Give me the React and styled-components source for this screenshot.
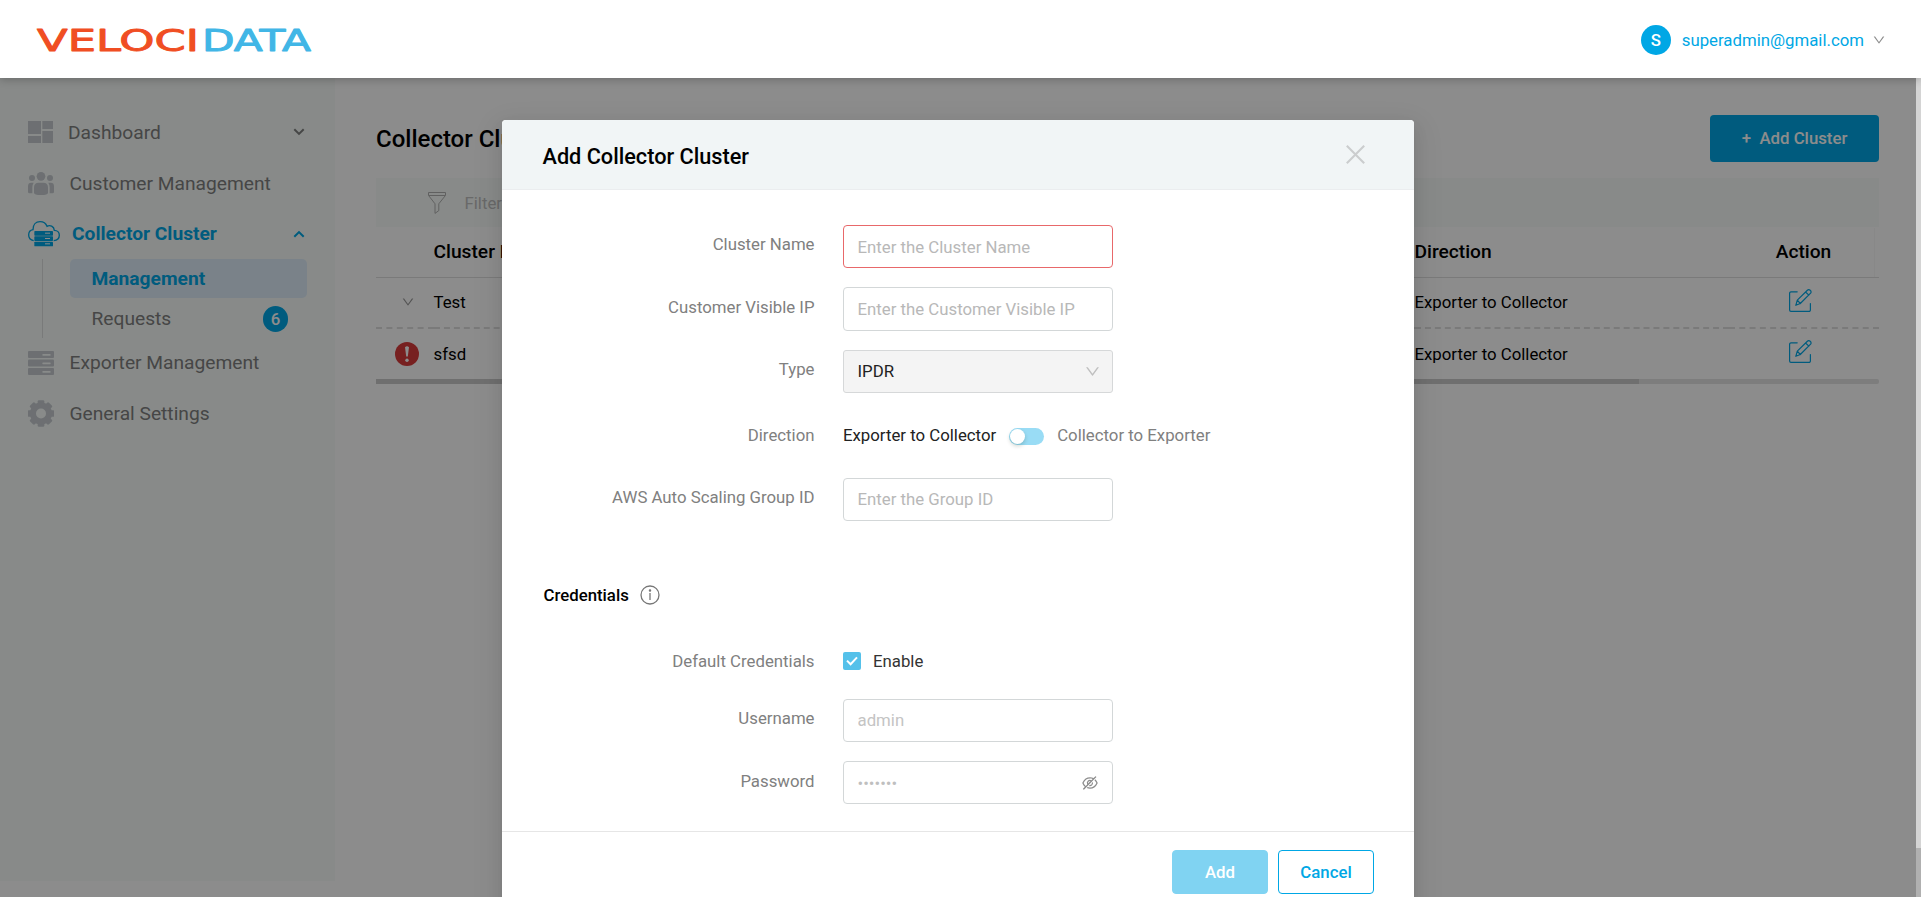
import React from "react";
import styled, { createGlobalStyle } from "styled-components";
import { AiOutlineDown, AiOutlineEyeInvisible } from "react-icons/ai";

const GlobalStyle = createGlobalStyle`
  *, *::before, *::after { box-sizing: border-box; }
  body {
    margin: 0;
    background: #fff;
    font-family: Roboto, "Liberation Sans", sans-serif;
    font-size: 16.8px;
    color: #000;
    overflow: hidden;
  }
`;

const brand = "#00a7e5";

const Page = styled.div`
  position: relative;
  height: 897px;
  overflow: hidden;
  display: flex;
  flex-direction: column;
`;

const Header = styled.header`
  position: relative;
  z-index: 3;
  flex: none;
  height: 78px;
  background: #fff;
  box-shadow: 0 2px 8px rgba(0, 0, 0, 0.22);
  display: flex;
  align-items: center;
  justify-content: space-between;
  padding: 2px 35px 0 32px;
`;

const Account = styled.div`
  display: flex;
  align-items: center;
  color: ${brand};
  svg { color: #8c8c8c; margin-left: 8px; }
`;

const Avatar = styled.span`
  width: 30px;
  height: 30px;
  border-radius: 50%;
  background: ${brand};
  color: #fff;
  font-weight: 500;
  display: flex;
  align-items: center;
  justify-content: center;
  margin-right: 11px;
`;

const Layout = styled.div`
  flex: 1;
  display: flex;
  align-items: flex-start;
`;

const Sidebar = styled.nav`
  width: 335px;
  height: 803px;
  flex: none;
  background: #f7fcf9;
  padding: 29px 28px 0;
`;

const NavItem = styled.div`
  height: 50.7px;
  display: flex;
  align-items: center;
  padding-right: 2.5px;
  font-size: 19.2px;
  color: ${(p) => (p.$active ? brand : "#808080")};
  font-weight: ${(p) => (p.$active ? 700 : 400)};
  > span { flex: 1; padding-left: ${(p) => p.$gap}px; }
  > svg { flex: none; }
`;

const SubMenu = styled.div`
  height: 79px;
  margin-left: 14px;
  border-left: 1px solid #dcdfde;
  padding-left: 27px;
  margin-bottom: -0.8px;
`;

const SubItem = styled.div`
  height: 39px;
  padding: 0 19px 0 21.5px;
  margin-bottom: 1px;
  display: flex;
  align-items: center;
  justify-content: space-between;
  border-radius: 5px;
  font-size: 19.2px;
  background: ${(p) => (p.$active ? "#dfedf9" : "transparent")};
  color: ${(p) => (p.$active ? brand : "#808080")};
  font-weight: ${(p) => (p.$active ? 700 : 400)};
`;

const Badge = styled.span`
  width: 25px;
  height: 26px;
  border-radius: 13px;
  background: ${brand};
  color: #fff;
  font-size: 16.8px;
  font-weight: 500;
  display: flex;
  align-items: center;
  justify-content: center;
`;

const Main = styled.main`
  flex: 1;
  padding: 37px 42px 0 41px;
`;

const TitleBar = styled.div`
  height: 47px;
  display: flex;
  align-items: center;
  justify-content: space-between;
  margin-bottom: 16px;
`;

const Title = styled.h1`
  margin: 0;
  font-size: 24px;
  font-weight: 500;
`;

const AddClusterButton = styled.button`
  width: 169px;
  height: 47px;
  border: 0;
  border-radius: 4px;
  background: ${brand};
  color: #fff;
  font: 500 16.8px Roboto, sans-serif;
  display: flex;
  align-items: center;
  justify-content: center;
  gap: 8.5px;
  padding-bottom: 2px;
`;

const FilterBar = styled.div`
  height: 49px;
  background: #f7fcf9;
  display: flex;
  align-items: center;
  padding-left: 52px;
  gap: 18.5px;
  color: #bfbfbf;
`;

const TableRow = styled.div`
  display: grid;
  grid-template-columns: 57.5px 981px 1fr 150px;
  height: ${(p) => p.$height}px;
  > div {
    display: flex;
    align-items: center;
    border-bottom: ${(p) => p.$line};
  }
`;

const HeadRow = styled(TableRow)`
  font-size: 19.2px;
  font-weight: 500;
  > div { padding-bottom: 2px; }
`;

const StatusCell = styled.div`
  padding-left: ${(p) => p.$inset}px;
`;

const ActionCell = styled.div`
  justify-content: center;
  padding-right: ${(p) => p.$shift || 0}px;
  padding-bottom: ${(p) => p.$lift || 0}px;
`;

const ColumnRule = styled.div`
  width: 1px;
  height: 49px;
  margin: -50px 4px 0 auto;
  background: #f7f7f7;
`;

const HorizontalTrack = styled.div`
  height: 5px;
  background: #e4e4e4;
  border-radius: 2px;
  > div { width: 1263px; height: 5px; background: #cbcbcb; }
`;

const Overlay = styled.div`
  position: absolute;
  z-index: 2;
  inset: 78px 0 0 0;
  background: rgba(0, 0, 0, 0.45);
  display: flex;
`;

const DialogArea = styled.div`
  flex: 1;
  display: flex;
  justify-content: center;
  align-items: flex-start;
  padding-top: 42px;
  overflow: hidden;
`;

const VerticalTrack = styled.div`
  width: 5px;
  background: #d4d4d4;
  padding-top: 770px;
  > div { height: 49px; background: #b0b0b0; }
`;

const Dialog = styled.section`
  width: 912px;
  background: #fff;
  border-radius: 4px;
  box-shadow: 0 3px 6px -4px rgba(0, 0, 0, 0.12), 0 6px 16px rgba(0, 0, 0, 0.08),
    0 9px 28px 8px rgba(0, 0, 0, 0.05);
`;

const DialogHeader = styled.div`
  height: 70px;
  padding: 3px 49px 0 40.5px;
  display: flex;
  align-items: center;
  justify-content: space-between;
  background: #f1f5f6;
  border-bottom: 1px solid #ebedef;
  border-radius: 4px 4px 0 0;
  h2 { margin: 0; font-size: 21.7px; font-weight: 500; }
  svg { margin-bottom: 3px; }
`;

const Form = styled.div`
  height: 641px;
  padding-top: 35px;
`;

const Field = styled.div`
  display: flex;
  height: ${(p) => p.$height || 62.4}px;
`;

const Label = styled.label`
  width: 312.5px;
  margin-right: 28.5px;
  text-align: right;
  line-height: ${(p) => p.$line || 39.8}px;
  color: #808080;
`;

const control = `
  width: 270px;
  height: 43.4px;
  border-radius: 4px;
  font: 400 16.8px Roboto, sans-serif;
`;

const TextInput = styled.input`
  ${control}
  padding: 0 13.5px;
  border: 1px solid ${(p) => (p.$invalid ? "#e8686a" : "#d3d7d8")};
  background: #fff;
  color: #c4c4c4;
  outline: 0;
  &::placeholder { color: #b8b8b8; opacity: 1; }
`;

const Select = styled.div`
  ${control}
  padding: 0 11.5px 1.5px 13.5px;
  border: 1px solid #d6d8d9;
  border-radius: 3px;
  background: #f4f4f4;
  color: #222;
  display: flex;
  align-items: center;
  justify-content: space-between;
  svg { color: #bfbfbf; margin-top: 2px; }
`;

const PasswordBox = styled.div`
  ${control}
  border: 1px solid #d3d7d8;
  display: flex;
  align-items: center;
  justify-content: space-between;
  padding: 0 13.5px 0 0;
  color: #8c8c8c;
  input {
    width: 200px;
    border: 0;
    outline: 0;
    padding: 0 0 0 13.5px;
    background: transparent;
    color: #bfbfbf;
    font: inherit;
  }
`;

const DirectionChoice = styled.div`
  display: flex;
  align-items: center;
  height: 46px;
  line-height: 20px;
  color: #222;
  span { margin-bottom: 0.2px; }
  span:last-child { color: #808080; }
`;

const Toggle = styled.div`
  width: 35px;
  height: 17px;
  margin: 2px 13px 0;
  border-radius: 9px;
  background: #99dcf5;
  padding: 1px;
  &::after {
    content: "";
    display: block;
    width: 15px;
    height: 15px;
    border-radius: 50%;
    background: #fff;
    box-shadow: 0 2px 4px rgba(0, 35, 11, 0.2);
  }
`;

const SectionTitle = styled.div`
  padding: 64px 0 0 41.5px;
  height: 119px;
  display: flex;
  align-items: flex-start;
  gap: 11.5px;
  font-weight: 500;
  line-height: 20px;
`;

const CheckOption = styled.div`
  display: flex;
  align-items: center;
  height: 41px;
  gap: 12px;
  color: #333;
`;

const CheckBox = styled.span`
  width: 18px;
  height: 18px;
  border-radius: 2px;
  background: #55c1ea;
  display: flex;
  align-items: center;
  justify-content: center;
`;

const DialogFooter = styled.div`
  height: 100px;
  padding: 18px 40px;
  border-top: 1px solid #e6e6e6;
  display: flex;
  justify-content: flex-end;
  gap: 10px;
`;

const FooterButton = styled.button`
  width: 96px;
  height: 44px;
  border-radius: 4px;
  font: 500 16.8px Roboto, sans-serif;
  border: 1px solid ${(p) => (p.$filled ? "#80d3f2" : brand)};
  background: ${(p) => (p.$filled ? "#80d3f2" : "#fff")};
  color: ${(p) => (p.$filled ? "#fff" : brand)};
`;

const Logo = () => (
  <svg width="288" height="50" viewBox="-4 -12 288 50" fontFamily="DejaVu Sans" fontSize="29.5" strokeWidth="0.9" strokeLinejoin="round">
    <text x="1" y="23.5" textLength="162" lengthAdjust="spacingAndGlyphs" fill="#f04e23" stroke="#f04e23">VELOCI</text>
    <text x="166" y="23.5" textLength="109" lengthAdjust="spacingAndGlyphs" fill="#41b6e6" stroke="#41b6e6">DATA</text>
  </svg>
);

const Caret = ({ up }) => (
  <svg width="12" height="8" viewBox="0 0 12 8" fill="none" stroke="currentColor" strokeWidth="2">
    <path d={up ? "M1.3 6.8 6 2.1l4.7 4.7" : "M1.3 1.2 6 5.9l4.7-4.7"} />
  </svg>
);

const iconGrey = "#c6cbd0";

const DashboardIcon = () => (
  <svg width="25" height="22" viewBox="0 0 75 66" fill={iconGrey}>
    <path d="M0 0h39v39H0zM43 0h32v24H43zM0 45h39v21H0zM43 30h32v36H43z" />
  </svg>
);

const PeopleIcon = () => (
  <svg width="26" height="23" viewBox="0 0 78 69" fill={iconGrey}>
    <circle cx="39" cy="13" r="13" />
    <circle cx="12" cy="18" r="9" />
    <circle cx="66" cy="18" r="9" />
    <path d="M18 64V46q0-14 14-14h14q14 0 14 14v18q-4 5-12 5H30q-8 0-12-5z" />
    <path d="M0 60V42q0-10 10-10h7q-4 6-4 14v18H5q-5 0-5-4zM78 60V42q0-10-10-10h-7q4 6 4 14v18h8q5 0 5-4z" />
  </svg>
);

const ServerIcon = () => (
  <svg width="26" height="24" viewBox="0 0 78 72">
    {[0, 25.5, 51].map((y) => (
      <g key={y}>
        <rect y={y} width="78" height="21" rx="3" fill={iconGrey} />
        <rect x="43" y={y + 9} width="25" height="5" rx="2" fill="#f9fefb" />
      </g>
    ))}
  </svg>
);

const GearIcon = () => (
  <svg width="26" height="27" viewBox="-39 -40.5 78 81" fill={iconGrey}>
    {[0, 45, 90, 135].map((a) => (
      <rect key={a} x="-10" y="-40" width="20" height="80" rx="4" transform={`rotate(${a})`} />
    ))}
    <circle r="33" />
    <circle r="15" fill="#f9fefb" />
  </svg>
);

const CloudServerIcon = () => (
  <svg width="32" height="26" viewBox="0 0 96 78">
    <path
      d="M17 59C7 57 2 50 2 42c0-9 6-15 13-16C15 11 24 2 36 2c11 0 18 6 21 14 9-5 21 0 22 12 9 0 15 7 15 15s-6 15-17 16"
      fill="none"
      stroke={brand}
      strokeWidth="4"
    />
    {[30, 46, 62].map((y) => (
      <g key={y}>
        <rect x="19" y={y} width="56" height="14" rx="2" fill={brand} />
        <rect x="51" y={y + 5} width="15" height="3" fill="#f9fefb" />
      </g>
    ))}
  </svg>
);

const FilterIcon = () => (
  <svg width="18" height="22" viewBox="0 0 18 22" fill="none" stroke="#b0b0b0" strokeWidth="1">
    <path d="M.5.5h17v3h-17zM.8 3.8l6.2 8v9.6l3.8-2.8v-6.8l6.4-8" />
  </svg>
);

const EditIcon = () => (
  <svg width="23" height="23" viewBox="0 0 23 23" fill="none" stroke={brand} strokeWidth="1.2" strokeLinejoin="round" strokeLinecap="round">
    <path d="M8.2 2.8H2a1.4 1.4 0 0 0-1.4 1.4V21A1.4 1.4 0 0 0 2 22.4h18a1.4 1.4 0 0 0 1.4-1.4v-6.4" />
    <path d="M6.8 16.3l1.5-5.2L18.4 1.2q1.3-1.2 2.8.1t.4 2.9L11.3 14.5zM8.3 11.1l3 3.4M16.6 3l3.2 3.2" />
  </svg>
);

const AlertIcon = () => (
  <svg width="24" height="24" viewBox="0 0 24 24">
    <circle cx="12" cy="12" r="12" fill="#d93b3b" />
    <path d="M10 5.2q2-1.8 4 0l-1.2 9.2h-1.6z" fill="#fff" />
    <circle cx="12" cy="18.2" r="1.7" fill="#fff" />
  </svg>
);

const CloseIcon = () => (
  <svg width="19" height="19" viewBox="0 0 19 19" stroke="#cbcdce" strokeWidth="2.1">
    <path d="M.8.8l17.4 17.4M18.2.8.8 18.2" />
  </svg>
);

const InfoIcon = () => (
  <svg width="20" height="20" viewBox="0 0 20 20" fill="none" stroke="#777" strokeWidth="1.3">
    <circle cx="10" cy="10" r="9" />
    <path d="M10 8v7" />
    <circle cx="10" cy="5.6" r=".6" fill="#777" />
  </svg>
);

const CheckIcon = () => (
  <svg width="12" height="10" viewBox="0 0 12 10" fill="none" stroke="#fff" strokeWidth="2">
    <path d="M1 4.6l3.6 3.6L11 1.4" />
  </svg>
);

const clusters = [
  { name: "Test", direction: "Exporter to Collector", alert: false, height: 52, lift: 3 },
  { name: "sfsd", direction: "Exporter to Collector", alert: true, height: 50, lift: 5 },
];

export default function App() {
  return (
    <Page>
      <GlobalStyle />
      <Header>
        <Logo />
        <Account>
          <Avatar>S</Avatar>
          superadmin@gmail.com
          <AiOutlineDown size={14} />
        </Account>
      </Header>

      <Layout>
        <Sidebar>
          <NavItem $gap={15}>
            <DashboardIcon />
            <span>Dashboard</span>
            <Caret />
          </NavItem>
          <NavItem $gap={15.5}>
            <PeopleIcon />
            <span>Customer Management</span>
          </NavItem>
          <NavItem $gap={12} $active>
            <CloudServerIcon />
            <span>Collector Cluster</span>
            <Caret up />
          </NavItem>
          <SubMenu>
            <SubItem $active>Management</SubItem>
            <SubItem>
              Requests <Badge>6</Badge>
            </SubItem>
          </SubMenu>
          <NavItem $gap={15.5}>
            <ServerIcon />
            <span>Exporter Management</span>
          </NavItem>
          <NavItem $gap={15.5}>
            <GearIcon />
            <span>General Settings</span>
          </NavItem>
        </Sidebar>

        <Main>
          <TitleBar>
            <Title>Collector Clusters</Title>
            <AddClusterButton>
              <span>+</span>
              <span>Add Cluster</span>
            </AddClusterButton>
          </TitleBar>
          <FilterBar>
            <FilterIcon />
            <span>Filter</span>
          </FilterBar>
          <HeadRow $height={51} $line="1px solid #dedede">
            <div />
            <div>Cluster Name</div>
            <div>Direction</div>
            <ActionCell $shift={1}>Action</ActionCell>
          </HeadRow>
          <ColumnRule />
          {clusters.map((c, i) => (
            <TableRow key={c.name} $height={c.height} $line={i === 0 ? "2px dashed #dfdfdf" : "0"}>
              <StatusCell $inset={c.alert ? 19 : 25}>
                {c.alert ? <AlertIcon /> : <AiOutlineDown size={14} color="#999" />}
              </StatusCell>
              <div>{c.name}</div>
              <div>{c.direction}</div>
              <ActionCell $shift={7} $lift={c.lift}>
                <EditIcon />
              </ActionCell>
            </TableRow>
          ))}
          <HorizontalTrack>
            <div />
          </HorizontalTrack>
        </Main>
      </Layout>

      <Overlay>
        <DialogArea>
          <Dialog>
            <DialogHeader>
              <h2>Add Collector Cluster</h2>
              <CloseIcon />
            </DialogHeader>
            <Form>
              <Field>
                <Label>Cluster Name</Label>
                <TextInput $invalid placeholder="Enter the Cluster Name" />
              </Field>
              <Field>
                <Label $line={40.2}>Customer Visible IP</Label>
                <TextInput placeholder="Enter the Customer Visible IP" />
              </Field>
              <Field>
                <Label>Type</Label>
                <Select>
                  IPDR <AiOutlineDown size={17} />
                </Select>
              </Field>
              <Field $height={65.6}>
                <Label $line={46}>Direction</Label>
                <DirectionChoice>
                  <span>Exporter to Collector</span>
                  <Toggle />
                  <span>Collector to Exporter</span>
                </DirectionChoice>
              </Field>
              <Field $height={43.4}>
                <Label>AWS Auto Scaling Group ID</Label>
                <TextInput placeholder="Enter the Group ID" />
              </Field>
              <SectionTitle>
                Credentials <InfoIcon />
              </SectionTitle>
              <Field $height={58.4}>
                <Label $line={42}>Default Credentials</Label>
                <CheckOption>
                  <CheckBox>
                    <CheckIcon />
                  </CheckBox>
                  Enable
                </CheckOption>
              </Field>
              <Field>
                <Label>Username</Label>
                <TextInput defaultValue="admin" disabled />
              </Field>
              <Field>
                <Label $line={40.2}>Password</Label>
                <PasswordBox>
                  <input type="password" defaultValue="secret1" disabled />
                  <AiOutlineEyeInvisible size={18} />
                </PasswordBox>
              </Field>
            </Form>
            <DialogFooter>
              <FooterButton $filled>Add</FooterButton>
              <FooterButton>Cancel</FooterButton>
            </DialogFooter>
          </Dialog>
        </DialogArea>
        <VerticalTrack>
          <div />
        </VerticalTrack>
      </Overlay>
    </Page>
  );
}
